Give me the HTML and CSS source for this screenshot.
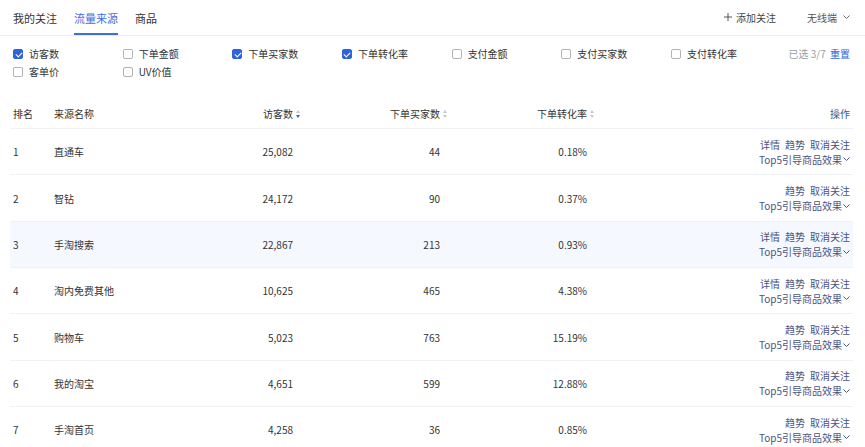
FILE: index.html
```html
<!DOCTYPE html>
<html lang="zh-CN">
<head>
<meta charset="utf-8">
<title>流量来源</title>
<link rel="stylesheet" href="styles.css">
</head>
<body>
<div class="tabbar">
  <div class="tabs">
    <span class="tab">我的关注</span>
    <span class="tab active">流量来源</span>
    <span class="tab">商品</span>
  </div>
  <div class="tools">
    <span class="add"><svg class="plus" viewBox="0 0 8 8" width="8" height="8"><path d="M4 0V8M0 4H8" stroke="#555" stroke-width="1" fill="none"/></svg>添加关注</span>
    <span class="device">无线端<svg class="chev" viewBox="0 0 7 4" width="7" height="4"><path d="M0.5 0.5L3.5 3.5L6.5 0.5" stroke="#666" stroke-width="1" fill="none"/></svg></span>
  </div>
</div>

<div class="filters">
  <div class="opts">
    <label class="opt"><span class="cb on"></span>访客数</label>
    <label class="opt"><span class="cb"></span>下单金额</label>
    <label class="opt"><span class="cb on"></span>下单买家数</label>
    <label class="opt"><span class="cb on"></span>下单转化率</label>
    <label class="opt"><span class="cb"></span>支付金额</label>
    <label class="opt"><span class="cb"></span>支付买家数</label>
    <label class="opt"><span class="cb"></span>支付转化率</label>
    <label class="opt"><span class="cb"></span>客单价</label>
    <label class="opt"><span class="cb"></span>UV价值</label>
  </div>
  <div class="selected">已选 3/7 <span class="reset">重置</span></div>
</div>

<div class="table">
  <div class="row head">
    <div class="c rank">排名</div>
    <div class="c name">来源名称</div>
    <div class="c num">访客数<span class="sort active"></span></div>
    <div class="c num">下单买家数<span class="sort"></span></div>
    <div class="c num">下单转化率<span class="sort"></span></div>
    <div class="c ops">操作</div>
  </div>

  <div class="row">
    <div class="c rank">1</div><div class="c name">直通车</div>
    <div class="c num">25,082</div><div class="c num">44</div><div class="c num">0.18%</div>
    <div class="c ops"><div class="links"><span>详情</span><span>趋势</span><span>取消关注</span></div><div class="top5">Top5引导商品效果<svg class="chev" viewBox="0 0 7 4" width="7" height="4"><path d="M0.5 0.5L3.5 3.5L6.5 0.5" stroke="#4a5480" stroke-width="1" fill="none"/></svg></div></div>
  </div>
  <div class="row">
    <div class="c rank">2</div><div class="c name">智钻</div>
    <div class="c num">24,172</div><div class="c num">90</div><div class="c num">0.37%</div>
    <div class="c ops"><div class="links"><span>趋势</span><span>取消关注</span></div><div class="top5">Top5引导商品效果<svg class="chev" viewBox="0 0 7 4" width="7" height="4"><path d="M0.5 0.5L3.5 3.5L6.5 0.5" stroke="#4a5480" stroke-width="1" fill="none"/></svg></div></div>
  </div>
  <div class="row hover">
    <div class="c rank">3</div><div class="c name">手淘搜索</div>
    <div class="c num">22,867</div><div class="c num">213</div><div class="c num">0.93%</div>
    <div class="c ops"><div class="links"><span>详情</span><span>趋势</span><span>取消关注</span></div><div class="top5">Top5引导商品效果<svg class="chev" viewBox="0 0 7 4" width="7" height="4"><path d="M0.5 0.5L3.5 3.5L6.5 0.5" stroke="#4a5480" stroke-width="1" fill="none"/></svg></div></div>
  </div>
  <div class="row">
    <div class="c rank">4</div><div class="c name">淘内免费其他</div>
    <div class="c num">10,625</div><div class="c num">465</div><div class="c num">4.38%</div>
    <div class="c ops"><div class="links"><span>详情</span><span>趋势</span><span>取消关注</span></div><div class="top5">Top5引导商品效果<svg class="chev" viewBox="0 0 7 4" width="7" height="4"><path d="M0.5 0.5L3.5 3.5L6.5 0.5" stroke="#4a5480" stroke-width="1" fill="none"/></svg></div></div>
  </div>
  <div class="row">
    <div class="c rank">5</div><div class="c name">购物车</div>
    <div class="c num">5,023</div><div class="c num">763</div><div class="c num">15.19%</div>
    <div class="c ops"><div class="links"><span>趋势</span><span>取消关注</span></div><div class="top5">Top5引导商品效果<svg class="chev" viewBox="0 0 7 4" width="7" height="4"><path d="M0.5 0.5L3.5 3.5L6.5 0.5" stroke="#4a5480" stroke-width="1" fill="none"/></svg></div></div>
  </div>
  <div class="row">
    <div class="c rank">6</div><div class="c name">我的淘宝</div>
    <div class="c num">4,651</div><div class="c num">599</div><div class="c num">12.88%</div>
    <div class="c ops"><div class="links"><span>趋势</span><span>取消关注</span></div><div class="top5">Top5引导商品效果<svg class="chev" viewBox="0 0 7 4" width="7" height="4"><path d="M0.5 0.5L3.5 3.5L6.5 0.5" stroke="#4a5480" stroke-width="1" fill="none"/></svg></div></div>
  </div>
  <div class="row">
    <div class="c rank">7</div><div class="c name">手淘首页</div>
    <div class="c num">4,258</div><div class="c num">36</div><div class="c num">0.85%</div>
    <div class="c ops"><div class="links"><span>趋势</span><span>取消关注</span></div><div class="top5">Top5引导商品效果<svg class="chev" viewBox="0 0 7 4" width="7" height="4"><path d="M0.5 0.5L3.5 3.5L6.5 0.5" stroke="#4a5480" stroke-width="1" fill="none"/></svg></div></div>
  </div>
</div>
</body>
</html>
```

FILE: styles.css
```css
* { box-sizing: border-box; }
html, body { margin: 0; padding: 0; background: #fff; }
body {
  font-family: "Noto Sans CJK SC", "Noto Sans", sans-serif;
  font-size: 10px;
  color: #333;
  overflow: hidden;
}

.tabbar {
  display: flex;
  justify-content: space-between;
  height: 36px;
  border-bottom: 1px solid #eceef2;
  padding: 0 15px 0 13px;
}
.tabs { display: flex; gap: 17px; }
.tab {
  position: relative;
  font-size: 11px;
  line-height: 16px;
  padding-top: 10px;
  height: 35px;
  color: #333;
}
.tab.active { color: #3b6fe2; }
.tab.active::after {
  content: "";
  position: absolute;
  left: 0; right: 0; bottom: 0;
  height: 2px;
  background: #3b6fe2;
}
.tools { display: flex; align-items: center; gap: 31px; padding-bottom: 1px; }
.add { display: flex; align-items: center; color: #444; }
.plus { margin-right: 4px; }
.device { display: flex; align-items: center; color: #555; }
.device .chev { margin-left: 6px; }

.filters {
  display: flex;
  align-items: flex-start;
  padding: 9px 15px 0 13px;
}
.opts {
  display: grid;
  grid-template-columns: repeat(7, 109.67px);
  grid-auto-rows: 18px;
}
.opt { display: flex; align-items: center; line-height: 18px; color: #333; }
.cb {
  position: relative;
  width: 10px; height: 10px;
  border: 1px solid #b4b4b8;
  border-radius: 2px;
  margin-right: 6px;
  background: #fff;
}
.cb.on { background: #2f62dd; border-color: #2f62dd; }
.cb.on::after {
  content: "";
  position: absolute;
  left: 2.5px; top: 0.5px;
  width: 3px; height: 5px;
  border: solid #fff;
  border-width: 0 1.3px 1.3px 0;
  transform: rotate(45deg);
}
.selected { margin-left: auto; line-height: 18px; color: #9a9ca3; }
.reset { color: #2f66e0; margin-left: 2px; }

.table { padding: 17px 12px 0 10px; }
.row {
  display: grid;
  grid-template-columns: 44px 159px 80px 147px 147px 1fr;
  align-items: center;
  height: 46.35px;
  border-bottom: 1px solid #f0f1f4;
  padding-right: 3px;
}
.row.head { height: 31px; }
.row.hover { background: #f5f8fe; }
.c { line-height: 15px; white-space: nowrap; }
.rank { padding-left: 3px; }
.num { text-align: right; }
.ops { text-align: right; color: #4a5480; }
.links { display: flex; justify-content: flex-end; gap: 5px; }
.top5 { display: flex; justify-content: flex-end; align-items: center; }
.top5 .chev { margin-left: 1px; }

.sort {
  display: inline-block;
  position: relative;
  width: 5px; height: 9px;
  margin-left: 3px;
  margin-right: -8px;
  vertical-align: -1px;
}
.sort::before, .sort::after {
  content: "";
  position: absolute;
  left: 0;
  border-left: 2.5px solid transparent;
  border-right: 2.5px solid transparent;
}
.sort::before { top: 0; border-bottom: 3px solid #c3c8d2; }
.sort::after { top: 5px; border-top: 3px solid #c3c8d2; }
.sort.active::after { border-top-color: #2f62dd; }
```
